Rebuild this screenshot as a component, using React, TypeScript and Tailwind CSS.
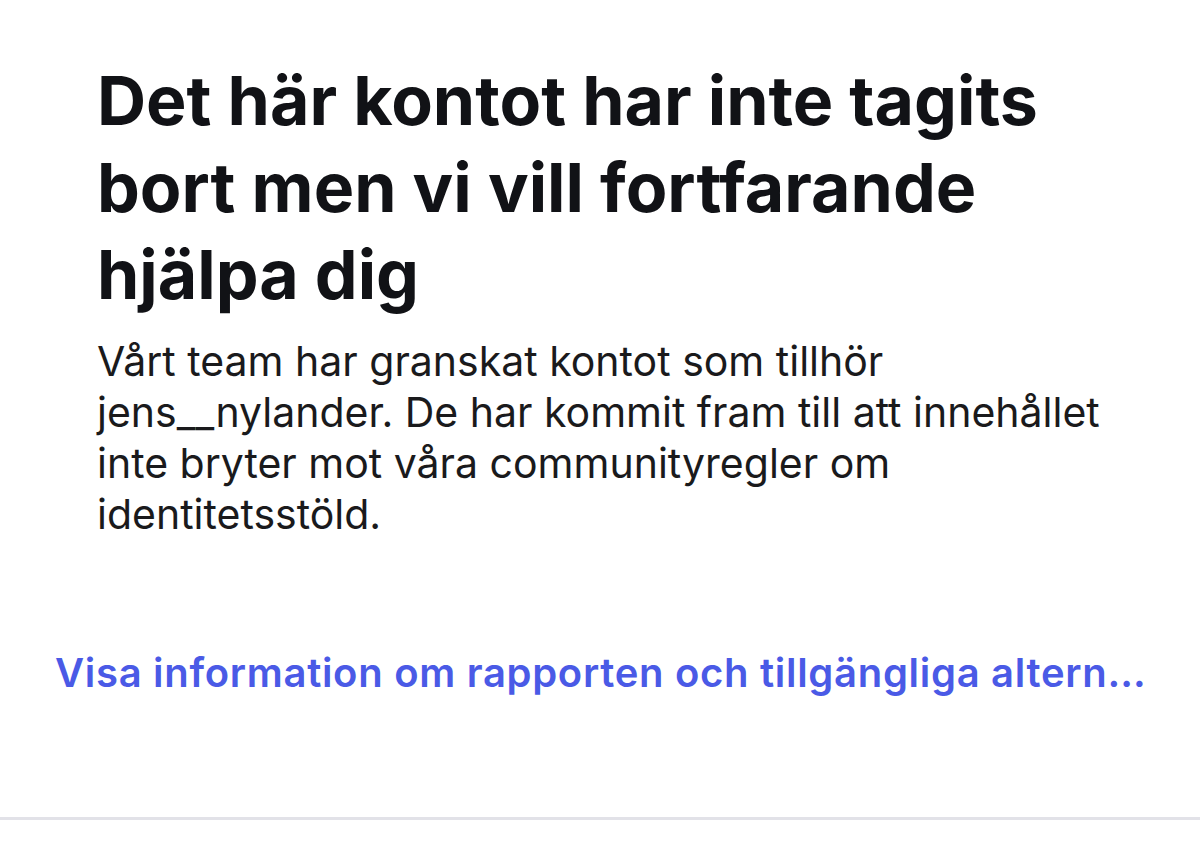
import React from "react";

export default function App() {
  return (
    <div
      className="w-[1200px] h-[863px] bg-white flex flex-col overflow-hidden"
      style={{ fontFamily: "Inter, 'Noto Sans', sans-serif" }}
    >
      <div className="pl-[97px] pr-[40px] pt-[57px]">
        <h1 className="text-[68px] leading-[87px] font-bold text-[#111216]">
          Det här kontot har inte tagits
          <br />
          bort men vi vill fortfarande
          <br />
          hjälpa dig
        </h1>
        <p className="mt-[18px] text-[41px] leading-[51px] text-[#1a1a1c]">
          Vårt team har granskat kontot som tillhör
          <br />
          jens__nylander. De har kommit fram till att innehållet
          <br />
          inte bryter mot våra communityregler om
          <br />
          identitetsstöld.
        </p>
      </div>
      <div className="pl-[55px] pr-[40px] mt-[108px]">
        <div className="text-[40px] leading-[50px] font-semibold tracking-[0.7px] text-[#4a5ae6] whitespace-nowrap">
          Visa information om rapporten och tillgängliga altern…
        </div>
      </div>
      <div className="mt-auto mb-[43px] h-[3px] bg-[#e2e2e8]" />
    </div>
  );
}
